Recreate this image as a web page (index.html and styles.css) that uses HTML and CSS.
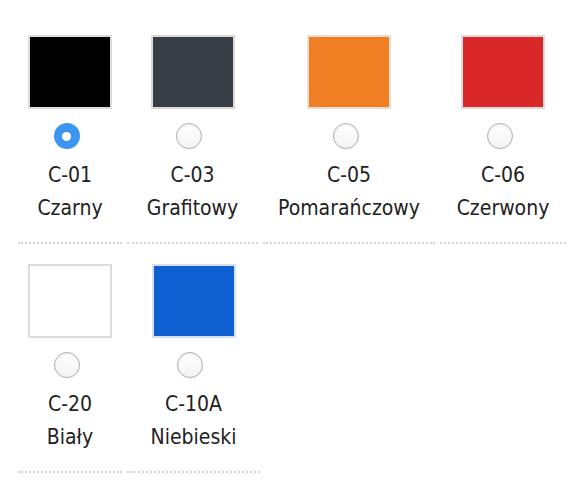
FILE: index.html
```html
<!DOCTYPE html>
<html lang="pl">
<head>
<meta charset="utf-8">
<link rel="stylesheet" href="styles.css">
</head>
<body>
<div class="colors">
  <div class="row">
    <label class="cell w1">
      <span class="swatch c-black"></span>
      <span class="radio checked"></span>
      <span class="code">C-01</span>
      <span class="name">Czarny</span>
    </label>
    <label class="cell w2">
      <span class="swatch c-graphite"></span>
      <span class="radio"></span>
      <span class="code">C-03</span>
      <span class="name">Grafitowy</span>
    </label>
    <label class="cell w3">
      <span class="swatch c-orange"></span>
      <span class="radio"></span>
      <span class="code">C-05</span>
      <span class="name">Pomarańczowy</span>
    </label>
    <label class="cell w4">
      <span class="swatch c-red"></span>
      <span class="radio"></span>
      <span class="code">C-06</span>
      <span class="name">Czerwony</span>
    </label>
  </div>
  <div class="row">
    <label class="cell w1">
      <span class="swatch c-white"></span>
      <span class="radio"></span>
      <span class="code">C-20</span>
      <span class="name">Biały</span>
    </label>
    <label class="cell w2b">
      <span class="swatch c-blue"></span>
      <span class="radio"></span>
      <span class="code">C-10A</span>
      <span class="name">Niebieski</span>
    </label>
  </div>
</div>
</body>
</html>
```
FILE: styles.css
```css
html, body {
  margin: 0;
  padding: 0;
  background: #fff;
}
body {
  font-family: "DejaVu Sans Condensed", "DejaVu Sans", Verdana, sans-serif;
  font-stretch: condensed;
  font-size: 21px;
  color: #222;
}
.colors {
  padding: 35px 0 0 18px;
  display: flex;
  flex-direction: column;
  gap: 20px;
}
.row {
  display: flex;
  gap: 5px;
}
.cell {
  display: flex;
  flex-direction: column;
  align-items: center;
  border-bottom: 2px dotted #d4d4d4;
  padding-bottom: 17px;
}
.w1 { width: 104px; }
.w2 { width: 131px; }
.w2b { width: 133px; }
.w3 { width: 172px; }
.w4 { width: 126px; }
.swatch {
  box-sizing: border-box;
  width: 84px;
  height: 74px;
  border: 2px solid #dcdcdc;
}
.c-black { background: #000; }
.c-graphite { background: #373e45; border-color: #dadada; }
.c-orange { background: #f07f23; border-color: #e8e0d8; }
.c-red { background: #d9272a; }
.c-white { background: #fff; }
.c-blue { background: #0e5fd0; border-color: #d6dee8; }
.radio {
  box-sizing: border-box;
  width: 26px;
  height: 26px;
  margin-top: 14px;
  margin-right: 7px;
  border-radius: 50%;
  border: 1px solid #b0b0b0;
  background: linear-gradient(#fff, #f3f3f3);
  box-shadow: inset 0 1px 2px rgba(0,0,0,0.08), 0 1px 1px rgba(0,0,0,0.05);
}
.radio.checked {
  border: none;
  background: #3d95f2;
  box-shadow: none;
  display: flex;
  align-items: center;
  justify-content: center;
}
.radio.checked::after {
  content: "";
  width: 9px;
  height: 9px;
  border-radius: 50%;
  background: #fff;
}
.code, .name {
  line-height: 33px;
  white-space: nowrap;
}
.code {
  margin-top: 10px;
}
```
